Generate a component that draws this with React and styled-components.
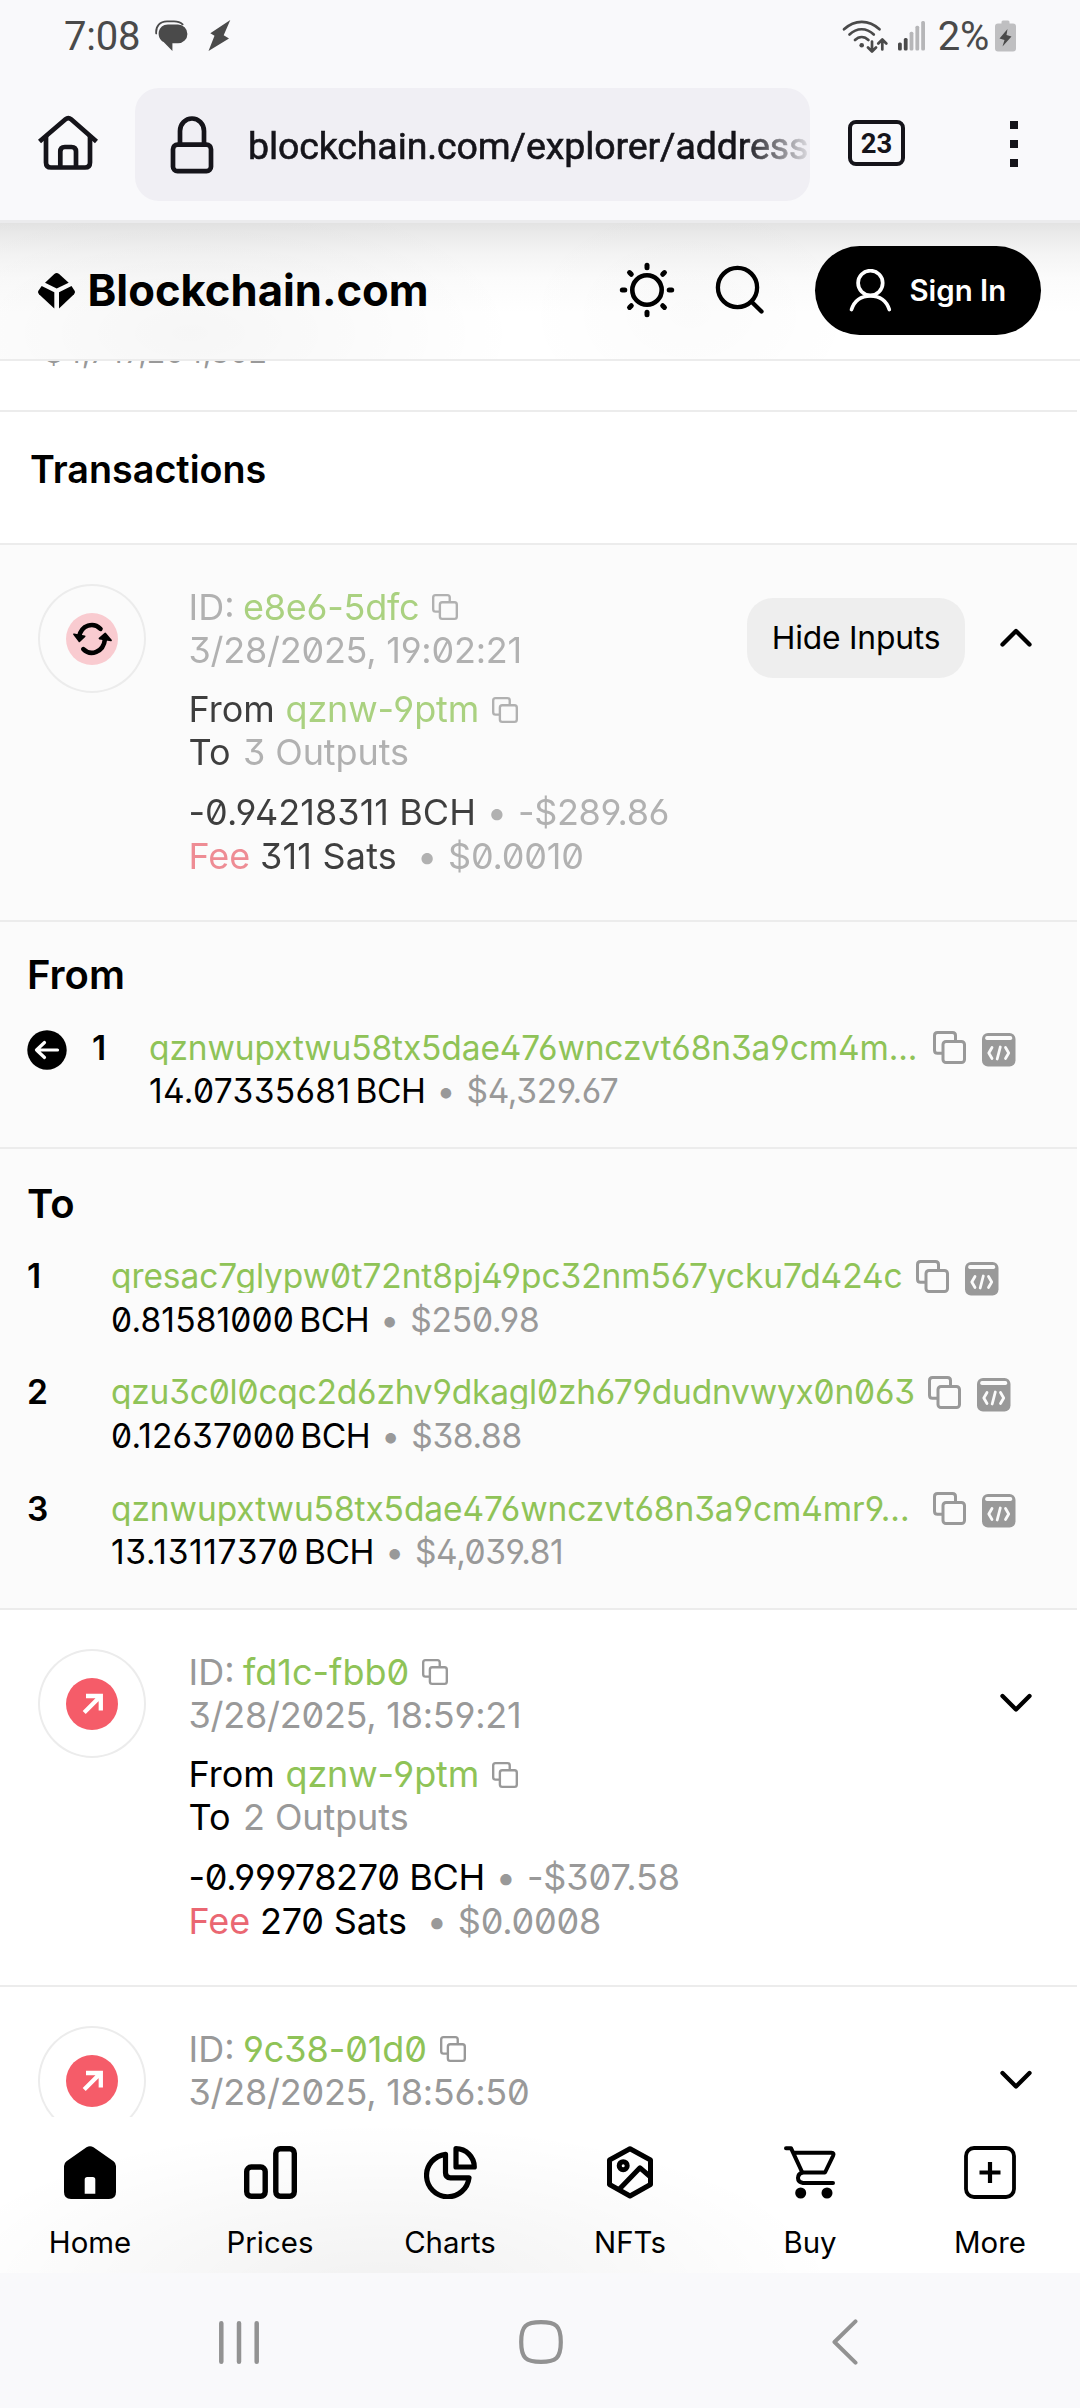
import React from "react";
import styled, { createGlobalStyle } from "styled-components";

const GlobalStyle = createGlobalStyle`
  * { box-sizing: border-box; }
  body { margin: 0; background: #f9f9fb; }
  svg { display: block; flex: none; }
`;

const Screen = styled.div`
  width: 1080px;
  height: 2408px;
  display: flex;
  flex-direction: column;
  overflow: hidden;
  background: #fff;
  font-family: Inter, "Liberation Sans", sans-serif;
  color: #000;
`;

/* Android status bar */
const StatusBar = styled.div`
  height: 72px;
  padding: 0 64px;
  display: flex;
  align-items: center;
  justify-content: space-between;
  background: #f9f9fb;
  color: #4a4a4a;
  font-family: Roboto, sans-serif;
  font-size: 40px;
  line-height: 47px;
`;
const StatusGroup = styled.div`
  display: flex;
  align-items: center;
  gap: ${(p) => p.$gap}px;
`;
const Clock = styled.span`
  margin-right: -5px;
  letter-spacing: -0.2px;
`;
const Battery = styled.span`
  display: flex;
  align-items: center;
  gap: 6px;
  margin-left: 2px;
  letter-spacing: -0.3px;
`;

/* Browser toolbar */
const Toolbar = styled.div`
  height: 151px;
  padding: 16px 62px 19px 38px;
  display: flex;
  align-items: center;
  background: #f9f9fb;
  border-bottom: 3px solid #ebebed;
  color: #15141a;
  font-family: Roboto, sans-serif;
`;
const HomeButton = styled.div`
  margin-top: -4px;
`;
const UrlField = styled.div`
  width: 675px;
  height: 113px;
  margin-left: 37px;
  padding-left: 35px;
  display: flex;
  align-items: center;
  gap: 34px;
  border-radius: 24px;
  background: #f0eff4;
  overflow: hidden;
`;
const Url = styled.span`
  flex: 1;
  padding-top: 3px;
  font-size: 37.5px;
  font-weight: 400;
  line-height: 44px;
  letter-spacing: -0.11px;
  -webkit-text-stroke: 0.6px #15141a;
  white-space: nowrap;
  overflow: hidden;
  mask-image: linear-gradient(to right, #000 88%, transparent 101%);
`;
const TabCount = styled.div`
  width: 57px;
  height: 46px;
  margin: -3px 0 0 38px;
  display: flex;
  align-items: center;
  justify-content: center;
  border: 4.5px solid #15141a;
  border-radius: 8px;
  font-size: 27.5px;
  font-weight: 700;
`;
const MenuDots = styled.div`
  display: flex;
  flex-direction: column;
  gap: 11px;
  margin: -1px 0 0 auto;
`;
const MenuDot = styled.i`
  width: 8px;
  height: 8px;
  background: #15141a;
`;

/* Site header */
const SiteHeader = styled.header`
  height: 138px;
  padding: 0 39px 2px 38px;
  display: flex;
  align-items: center;
  border-bottom: 2px solid #ececec;
  background:
    radial-gradient(ellipse 330px 150px at 190px 110px, rgba(0, 0, 0, 0.035), transparent),
    radial-gradient(ellipse 170px 120px at 690px 90px, rgba(0, 0, 0, 0.015), transparent),
    linear-gradient(to bottom, #e3e3e3 0, #ebebeb 12px, #f4f4f4 30px, #fbfbfb 55px, #fff 90px);
`;
const Brand = styled.div`
  display: flex;
  align-items: center;
  gap: 12.5px;
  font-size: 43.6px;
  font-weight: 700;
  line-height: 52px;
  margin-right: auto;
  padding-top: 2px;
`;
const HeaderTools = styled.div`
  display: flex;
  align-items: center;
  gap: 40px;
`;
const SignIn = styled.button`
  width: 226px;
  height: 89px;
  margin-left: 10px;
  padding: 1px 0 0 34px;
  display: flex;
  align-items: center;
  gap: 17.5px;
  border: 0;
  border-radius: 45px;
  background: #000;
  color: #fff;
  font: 600 29.4px/36px Inter, sans-serif;
  white-space: nowrap;
`;

/* Scrolled page body */
const Page = styled.main`
  height: 1756px;
  width: 1077px;
  overflow: hidden;
`;
const digitStyle = `font-feature-settings: "zero", "ss01", "cv09";`;
const ValueStrip = styled.div`
  height: 51px;
  padding-left: 44px;
  overflow: hidden;
  border-bottom: 2px solid #ececec;
`;
const ClippedValue = styled.div`
  ${digitStyle}
  margin-top: -30px;
  color: #999;
  font-size: 30.2px;
  line-height: 43px;
`;
const PageTitle = styled.h2`
  height: 133px;
  margin: 0;
  padding: 33.5px 0 0 30px;
  border-bottom: 2px solid #ececec;
  font-size: 37.7px;
  font-weight: 600;
  line-height: 46px;
`;

const TxRow = styled.article`
  height: 377px;
  padding: 39px 45px 0 38px;
  display: flex;
  align-items: flex-start;
  border-bottom: 2px solid #ececec;
  background: ${(p) => (p.$open ? "#fbfbfb" : "#fff")};
`;
const IconRing = styled.div`
  width: 108px;
  height: 109px;
  display: grid;
  place-items: center;
  border: 2px solid #ececec;
  border-radius: 50%;
`;
const TxInfo = styled.div`
  ${digitStyle}
  flex: 1;
  display: flex;
  flex-direction: column;
  gap: 16px;
  padding: 1.5px 0 0 42.5px;
  font-size: 36px;
  opacity: ${(p) => (p.$open ? 0.75 : 1)};
`;
const Line = styled.div`
  height: ${(p) => p.$h || 43.3}px;
  display: flex;
  align-items: center;
  line-height: 43.3px;
  white-space: nowrap;
`;
const Label = styled.span`
  width: ${(p) => p.$w}px;
  color: ${(p) => p.$color || "#000"};
`;
const Hash = styled.span`
  margin-right: 13px;
  color: #8fc357;
  letter-spacing: ${(p) => p.$ls || 0}px;
`;
const Muted = styled.span`
  color: #999;
  letter-spacing: ${(p) => p.$ls || 0}px;
`;
const Coins = styled.span`
  letter-spacing: ${(p) => p.$ls || 0}px;
`;
const Bullet = styled.span`
  width: ${(p) => p.$w}px;
  padding-left: ${(p) => p.$pad || 0}px;
  color: #999;
  text-align: center;
`;
const Actions = styled.div`
  height: 108px;
  display: flex;
  align-items: center;
  gap: 35px;
`;
const HideButton = styled.button`
  width: 218px;
  height: 80px;
  padding: 0;
  border: 0;
  border-radius: 26px;
  background: #eee;
  color: #000;
  font: 400 31.8px/40px Inter, sans-serif;
  letter-spacing: -0.2px;
`;

/* Inputs and outputs */
const Panel = styled.section`
  height: ${(p) => p.$h}px;
  padding: ${(p) => p.$top}px 0 0 27px;
  border-bottom: 2px solid #ececec;
  background: #fbfbfb;
`;
const PanelTitle = styled.h3`
  margin: 0 0 ${(p) => p.$gap}px;
  font-size: 40px;
  font-weight: 600;
  line-height: 48px;
`;
const Entry = styled.div`
  height: 116.3px;
  display: flex;
  align-items: flex-start;
`;
const Spender = styled.div`
  width: 65px;
  margin-top: -1px;
`;
const Index = styled.div`
  width: ${(p) => p.$w}px;
  font-size: 33.5px;
  font-weight: 600;
  line-height: 34px;
`;
const EntryBody = styled.div`
  ${digitStyle}
  font-size: 33.5px;
`;
const AddressLine = styled.div`
  height: 34px;
  display: flex;
  align-items: center;
`;
const Address = styled.span`
  width: ${(p) => (p.$w ? p.$w + "px" : "auto")};
  height: 34px;
  overflow: hidden;
  color: #8fc357;
  line-height: 34px;
  letter-spacing: ${(p) => p.$ls ?? -0.08}px;
  white-space: nowrap;
`;
const AddressIcons = styled.span`
  display: flex;
  align-items: flex-start;
  gap: 16px;
  margin: 3px 0 0 13.5px;
`;
const CodeBadge = styled.span`
  margin-top: 2px;
`;
const AmountLine = styled.div`
  margin-top: 5.5px;
  display: flex;
  line-height: 42px;
  white-space: nowrap;
`;
const Unit = styled.span`
  margin-left: 5px;
  letter-spacing: -0.4px;
`;

/* Tab bar and system navigation */
const TabBar = styled.nav`
  height: 156px;
  display: grid;
  grid-template-columns: repeat(6, 180px);
  background:
    radial-gradient(ellipse 460px 170px at 380px 175px, rgba(0, 0, 0, 0.055), transparent),
    #fff;
`;
const Tab = styled.a`
  padding-top: 29px;
  display: flex;
  flex-direction: column;
  align-items: center;
  gap: 26px;
  font-size: 29.4px;
  line-height: 36px;
`;
const SystemNav = styled.div`
  height: 135px;
  padding: 3px 0 0 219px;
  display: flex;
  align-items: center;
  background: #f9f9fb;
`;
const NavKey = styled.span`
  margin-left: ${(p) => p.$before}px;
`;

const stroke = (color, width) => ({
  fill: "none",
  stroke: color,
  strokeWidth: width,
  strokeLinecap: "round",
  strokeLinejoin: "round",
});

const ChatIcon = () => (
  <svg width="33" height="32" viewBox="0 0 33 32">
    <path d="M1.2 13.5C0.6 6 5 1.6 12 1.4h7c4 0 6.500 1 8.600 3" {...stroke("#4a4a4a", 1.8)} />
    <path d="M13 4.500h10a9.400 9.400 0 0 1 0 18.800h-5.600v7.600L8.600 22.100C0.500 17.500 2.700 4.500 13 4.500z" fill="#4a4a4a" />
  </svg>
);
const BoltIcon = () => (
  <svg width="23" height="32" viewBox="0 0 23 32">
    <path d="M22.300 0 2.300 13.300 6.500 15.700 0.500 31 21 18.500 15.700 15.200z" fill="#4a4a4a" />
  </svg>
);
const WifiIcon = () => (
  <svg width="46" height="33" viewBox="0 0 46 33">
    <g {...stroke("#4a4a4a", 2.700)}>
      <path d="M2 9.300C12.500-0.700 27-0.700 37.500 9.300M7.500 14.500c7.300-7 17-7 24.300 0M13 20c4-4 9.400-4 13.400 0" />
      <path d="M30 21.500V31M26 27.500l4 4 4-4M40.300 29.500V20M36.300 23.500l4-4 4 4" />
    </g>
    <circle cx="19.700" cy="25.300" r="2.300" fill="#4a4a4a" />
  </svg>
);
const SignalIcon = () => (
  <svg width="28" height="30" viewBox="0 0 28 30">
    {[21.5, 17, 10.7, 4.7, 0].map((y, i) => (
      <rect key={y} x={i * 5.8} y={y} width="3.800" height={29.5 - y} rx="1.500" fill={i < 2 ? "#4a4a4a" : "#b6b6b8"} />
    ))}
  </svg>
);
const BatteryIcon = () => (
  <svg width="21" height="32" viewBox="0 0 21 32">
    <path d="M6.500 3.500V2Q6.500 0.500 8 0.500h5q1.500 0 1.500 1.500v1.500H18q3 0 3 3V28.500q0 3-3 3H3q-3 0-3-3V6.500q0-3 3-3z" fill="#bfbfc1" />
    <path d="M12.500 9 4.500 18.500l5 1.500L7.500 26.500 16.500 16.500l-5-1.500z" fill="#4a4a4a" />
  </svg>
);
const BrowserHomeIcon = () => (
  <svg width="60" height="56" viewBox="0 0 60 56">
    <g {...stroke("#15141a", 4.700)} strokeLinecap="butt">
      <path d="M1.500 26.500 27.500 4.300q2.800-2.400 5.600 0L58.500 26.500" />
      <path d="M8 21V47.500q0 5 5 5H47q5 0 5-5V21M22.300 52V36.500q0-4.500 4.500-4.500h6.700q4.500 0 4.500 4.500V52" />
    </g>
  </svg>
);
const LockIcon = () => (
  <svg width="44" height="58" viewBox="0 0 44 58">
    <g {...stroke("#15141a", 4.700)}>
      <rect x="3" y="28.700" width="38" height="26.500" rx="4.500" />
      <path d="M10 28V15a12 12.500 0 0 1 24 0V28" />
    </g>
  </svg>
);
const LogoMark = () => (
  <svg width="37" height="36" viewBox="0 0 37 36">
    <path d="M7 9.700 16.300 1.100q2.400-2 4.800 0L30.700 9.700 18.700 15.500z" />
    <path d="M3.700 13 16.300 19.300V35.500L1 21.300Q-0.600 19.500 0.400 17.700z" />
    <path d="M33.500 13 21 19.300V35.500L36 21.300q1.600-1.800 0.600-3.600z" />
  </svg>
);
const SunIcon = () => (
  <svg width="56" height="56" viewBox="0 0 56 56">
    <circle cx="28" cy="28" r="14.700" {...stroke("#000", 4.600)} />
    {[0, 45, 90, 135, 180, 225, 270, 315].map((a) => (
      <path key={a} d="M28 3.300V5.800" transform={`rotate(${a} 28 28)`} {...stroke("#000", 5)} />
    ))}
  </svg>
);
const SearchIcon = () => (
  <svg width="50" height="50" viewBox="0 0 50 50">
    <g {...stroke("#000", 4.300)}>
      <circle cx="22.500" cy="22.500" r="19.600" />
      <path d="M36.800 37 46.500 46.500" />
    </g>
  </svg>
);
const UserIcon = () => (
  <svg width="43" height="43" viewBox="0 0 43 43">
    <g {...stroke("#fff", 3.700)}>
      <circle cx="21.400" cy="14" r="12.300" />
      <path d="M2.500 40.500C5.500 31.500 12.500 27 21.400 27s15.900 4.500 18.900 13.500" />
    </g>
  </svg>
);
const CopyIcon = ({ size = 33, color = "#999" }) => (
  <svg width={size} height={size} viewBox="0 0 33 33">
    <g {...stroke(color, 3)}>
      <path d="M9 22.300H4.500q-3 0-3-3V4.500q0-3 3-3H19.500q3 0 3 3V9" />
      <rect x="10" y="10.500" width="21.500" height="21" rx="3" />
    </g>
  </svg>
);
const CodeIcon = () => (
  <svg width="34" height="34" viewBox="0 0 34 34">
    <rect width="33.500" height="33.500" rx="6" fill="#999" />
    <rect x="3.200" y="3" width="27" height="4" rx="1.700" fill="#fbfbfb" />
    <path d="M10 14.500 6.800 20 10 25.500M23.500 14.500 26.700 20 23.500 25.500M18.300 14 15.200 26" {...stroke("#fbfbfb", 2.800)} />
  </svg>
);
const ArrowBackIcon = () => (
  <svg width="40" height="40" viewBox="0 0 40 40">
    <circle cx="20" cy="20" r="19.700" />
    <path d="M30.500 20H9.500M17.500 12.500 9.500 20 17.500 27.500" {...stroke("#fff", 3.200)} />
  </svg>
);
const SelfIcon = () => (
  <svg width="52" height="52" viewBox="0 0 52 52">
    <circle cx="26" cy="26" r="26" fill="#f9cbd0" />
    <path d="M13 24C15.500 11.500 27.500 9 34.500 15.800M39 26C37.500 39.500 24.500 43.500 17.300 36.200" {...stroke("#000", 4.600)} />
    <path d="M8 21.300 18.600 23.400 13.300 28.300zM45 27.300 33.500 25.500 39.300 20.500z" {...stroke("#000", 1.800)} fill="#000" />
  </svg>
);
const SentIcon = () => (
  <svg width="52" height="52" viewBox="0 0 52 52">
    <circle cx="26" cy="26" r="26" fill="#f55c69" />
    <path d="M18.200 34.500 34 18.700M20 18H34.800V32.500" fill="none" stroke="#fff" strokeWidth="4.300" />
  </svg>
);
const Chevron = ({ up }) => (
  <svg width="32" height="20" viewBox="0 0 32 20">
    <path d={up ? "M2.500 16.500 16 3 29.500 16.500" : "M2.500 3 16 16.500 29.500 3"} {...stroke("#000", 4.300)} />
  </svg>
);

const TabHome = () => (
  <svg width="52" height="53" viewBox="0 0 52 53">
    <path fillRule="evenodd" d="M22.500 1.300q3.500-2.200 7 0L49.500 15.300Q52 17.200 52 20V46q0 7-7 7H7q-7 0-7-7V20q0-2.800 2.500-4.700zM20.700 33.500V47.700H31.300V33.500q0-2.500-2.500-2.500H23.200q-2.500 0-2.500 2.500z" />
  </svg>
);
const TabPrices = () => (
  <svg width="53" height="53" viewBox="0 0 53 53">
    <rect x="2.700" y="21" width="18.500" height="29.300" rx="4.500" {...stroke("#000", 5.400)} />
    <rect x="31.800" y="2.700" width="18.500" height="47.600" rx="4.500" {...stroke("#000", 5.400)} />
  </svg>
);
const TabCharts = () => (
  <svg width="53" height="53" viewBox="0 0 53 53">
    <g {...stroke("#000", 5.200)}>
      <path d="M21.500 8.300A21.300 21.300 0 1 0 45 31.800H26.500q-5 0-5-5z" />
      <path d="M32 2.700A18.300 18.300 0 0 1 50.300 21H32z" />
    </g>
  </svg>
);
const TabNfts = () => (
  <svg width="48" height="53" viewBox="0 0 48 53">
    <g {...stroke("#000", 5)}>
      <path d="M24 2.800 44.500 14V38.500L24 50 3.500 38.500V14z" />
      <circle cx="17.200" cy="19.700" r="4" />
      <path d="M13.500 43 34 21.800 44 30.500" />
    </g>
  </svg>
);
const TabBuy = () => (
  <svg width="52" height="53" viewBox="0 0 52 53">
    <g {...stroke("#000", 4)}>
      <path d="M2 2.200H7L18.300 26.500H41L49 10Q50.500 6.700 47.500 6.700H9.500" />
      <path d="M18.300 26.500Q14 28 14 32t5 5H49" />
    </g>
    <circle cx="16.700" cy="47" r="5.500" />
    <circle cx="43" cy="47" r="5.500" />
  </svg>
);
const TabMore = () => (
  <svg width="52" height="53" viewBox="0 0 52 53">
    <rect x="2" y="2" width="48" height="49" rx="8" {...stroke("#000", 3.800)} />
    <path d="M15.500 26.500H36.500M26 16V37" fill="none" stroke="#000" strokeWidth="4.200" />
  </svg>
);

const RecentsIcon = () => (
  <svg width="40" height="43" viewBox="0 0 40 43">
    <path d="M2.300 2.300V40.700M20 2.300V40.700M37.700 2.300V40.700" {...stroke("#929292", 4.500)} />
  </svg>
);
const SysHomeIcon = () => (
  <svg width="44" height="44" viewBox="0 0 44 44">
    <path d="M22 2.200C37 2.200 41.800 6 41.800 22S37 41.800 22 41.800 2.200 38 2.200 22 7 2.200 22 2.200z" {...stroke("#929292", 4.200)} />
  </svg>
);
const SysBackIcon = () => (
  <svg width="26" height="46" viewBox="0 0 26 46">
    <path d="M23.500 2.300 2.500 23 23.500 43.700" {...stroke("#929292", 4)} />
  </svg>
);

/* "track" holds the letter-spacing of a row's coin, fee and id figures */
const transactions = [
  {
    id: "e8e6-5dfc", time: "3/28/2025, 19:02:21", from: "qznw-9ptm", outputs: "3 Outputs",
    coins: "-0.94218311 BCH", usd: "-$289.86", fee: "311 Sats", feeUsd: "$0.0010", open: true,
    track: { id: -0.25, coins: 0.05, usd: -0.35, fee: 0.2 },
  },
  {
    id: "fd1c-fbb0", time: "3/28/2025, 18:59:21", from: "qznw-9ptm", outputs: "2 Outputs",
    coins: "-0.99978270 BCH", usd: "-$307.58", fee: "270 Sats", feeUsd: "$0.0008",
    track: { id: 0, coins: -0.35, usd: -0.1, fee: -0.2 },
  },
  {
    id: "9c38-01d0", time: "3/28/2025, 18:56:50", outputs: "2 Outputs", from: "qznw-9ptm",
    track: { id: -0.1 },
  },
];
const input = {
  address: "qznwupxtwu58tx5dae476wnczvt68n3a9cm4m...", coins: "14.07335681", usd: "$4,329.67",
  width: 770, track: { address: -0.12, coins: 0.35, usd: -0.35 },
};
const outputs = [
  {
    address: "qresac7glypw0t72nt8pj49pc32nm567ycku7d424c", coins: "0.81581000", usd: "$250.98",
    track: { coins: 0.15, usd: -0.2 },
  },
  {
    address: "qzu3c0l0cqc2d6zhv9dkagl0zh679dudnvwyx0n063", coins: "0.12637000", usd: "$38.88",
    track: { address: -0.21, coins: 0.1, usd: -0.35 },
  },
  {
    address: "qznwupxtwu58tx5dae476wnczvt68n3a9cm4mr9...", coins: "13.13117370", usd: "$4,039.81",
    width: 808, track: { coins: 0.65, usd: -0.45 },
  },
];
const tabs = [
  ["Home", TabHome],
  ["Prices", TabPrices],
  ["Charts", TabCharts],
  ["NFTs", TabNfts],
  ["Buy", TabBuy],
  ["More", TabMore],
];

const Transaction = ({ tx }) => (
  <TxRow $open={tx.open}>
    <IconRing>{tx.open ? <SelfIcon /> : <SentIcon />}</IconRing>
    <TxInfo $open={tx.open}>
      <div>
        <Line>
          <Label $w={54.5} $color="#999">ID:</Label>
          <Hash $ls={tx.track.id}>{tx.id}</Hash>
          <CopyIcon size={26} />
        </Line>
        <Line><Muted $ls={-0.25}>{tx.time}</Muted></Line>
      </div>
      <div>
        <Line>
          <Label $w={97}>From</Label>
          <Hash $ls={-0.15}>{tx.from}</Hash>
          <CopyIcon size={26} />
        </Line>
        <Line>
          <Label $w={54.5}>To</Label>
          <Muted $ls={-0.1}>{tx.outputs}</Muted>
        </Line>
      </div>
      {tx.coins && (
        <div>
          <Line $h={44}>
            <Coins $ls={tx.track.coins}>{tx.coins}</Coins>
            <Bullet $w={42}>•</Bullet>
            <Muted $ls={tx.track.usd}>{tx.usd}</Muted>
          </Line>
          <Line $h={44}>
            <Label $w={71.5} $color="#ea6772">Fee</Label>
            <Coins $ls={tx.track.fee}>{tx.fee}</Coins>
            <Bullet $w={51} $pad={9}>•</Bullet>
            <Muted $ls={-0.2}>{tx.feeUsd}</Muted>
          </Line>
        </div>
      )}
    </TxInfo>
    <Actions>
      {tx.open && <HideButton>Hide Inputs</HideButton>}
      <Chevron up={tx.open} />
    </Actions>
  </TxRow>
);

const EntryDetails = ({ item }) => (
  <EntryBody>
    <AddressLine>
      <Address $w={item.width} $ls={item.track.address}>{item.address}</Address>
      <AddressIcons>
        <CopyIcon />
        <CodeBadge><CodeIcon /></CodeBadge>
      </AddressIcons>
    </AddressLine>
    <AmountLine>
      <Coins $ls={item.track.coins}>{item.coins}</Coins>
      <Unit>BCH</Unit>
      <Bullet $w={41}>•</Bullet>
      <Muted $ls={item.track.usd}>{item.usd}</Muted>
    </AmountLine>
  </EntryBody>
);

export default function App() {
  return (
    <Screen>
      <GlobalStyle />
      <StatusBar>
        <StatusGroup $gap={20}>
          <Clock>7:08</Clock>
          <ChatIcon />
          <BoltIcon />
        </StatusGroup>
        <StatusGroup $gap={10}>
          <WifiIcon />
          <SignalIcon />
          <Battery>
            2%
            <BatteryIcon />
          </Battery>
        </StatusGroup>
      </StatusBar>
      <Toolbar>
        <HomeButton><BrowserHomeIcon /></HomeButton>
        <UrlField>
          <LockIcon />
          <Url>blockchain.com/explorer/address</Url>
        </UrlField>
        <TabCount>23</TabCount>
        <MenuDots>
          <MenuDot />
          <MenuDot />
          <MenuDot />
        </MenuDots>
      </Toolbar>
      <SiteHeader>
        <Brand>
          <LogoMark />
          Blockchain.com
        </Brand>
        <HeaderTools>
          <SunIcon />
          <SearchIcon />
          <SignIn>
            <UserIcon />
            Sign In
          </SignIn>
        </HeaderTools>
      </SiteHeader>
      <Page>
        <ValueStrip>
          <ClippedValue>$4,747,204,802</ClippedValue>
        </ValueStrip>
        <PageTitle>Transactions</PageTitle>
        <Transaction tx={transactions[0]} />
        <Panel $h={227} $top={29}>
          <PanelTitle $gap={31.5}>From</PanelTitle>
          <Entry>
            <Spender><ArrowBackIcon /></Spender>
            <Index $w={57}>1</Index>
            <EntryDetails item={input} />
          </Entry>
        </Panel>
        <Panel $h={461} $top={30.5}>
          <PanelTitle $gap={31.5}>To</PanelTitle>
          {outputs.map((item, i) => (
            <Entry key={item.address}>
              <Index $w={84}>{i + 1}</Index>
              <EntryDetails item={item} />
            </Entry>
          ))}
        </Panel>
        <Transaction tx={transactions[1]} />
        <Transaction tx={transactions[2]} />
      </Page>
      <TabBar>
        {tabs.map(([name, Icon]) => (
          <Tab key={name}>
            <Icon />
            {name}
          </Tab>
        ))}
      </TabBar>
      <SystemNav>
        <RecentsIcon />
        <NavKey $before={260}><SysHomeIcon /></NavKey>
        <NavKey $before={269}><SysBackIcon /></NavKey>
      </SystemNav>
    </Screen>
  );
}
